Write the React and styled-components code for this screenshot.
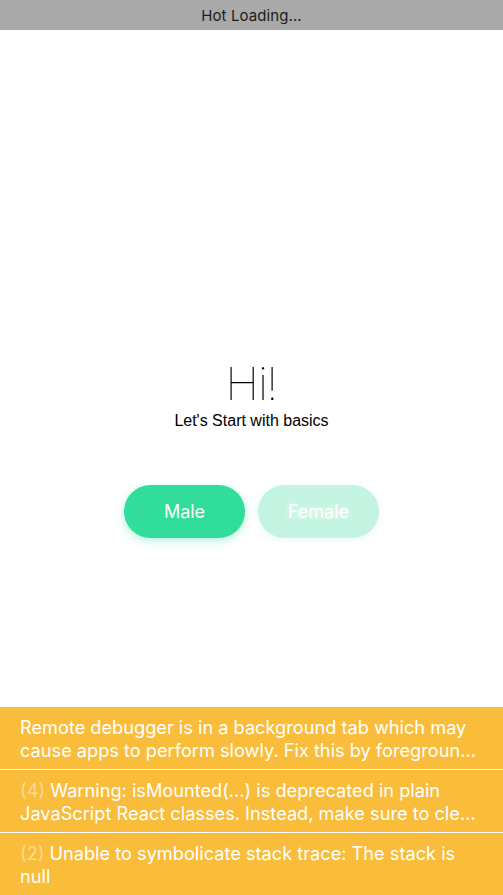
import React from "react";
import styled, { createGlobalStyle } from "styled-components";

const Global = createGlobalStyle`
  html, body { margin: 0; padding: 0; background: #ffffff; }
  body { font-family: Inter, "Noto Sans", sans-serif; -webkit-font-smoothing: antialiased; }
  #root { min-height: 100vh; }
`;

const Screen = styled.div`
  width: 503px;
  height: 895px;
  display: flex;
  flex-direction: column;
  overflow: hidden;
  background: #ffffff;
`;

const HotBar = styled.div`
  height: 30px;
  flex: 0 0 30px;
  background: #a9a9a9;
  color: #1c1c1c;
  font-family: Inter, sans-serif;
  font-size: 15px;
  display: flex;
  align-items: center;
  justify-content: center;
  letter-spacing: 0.1px;
`;

const Main = styled.div`
  flex: 1;
  display: flex;
  flex-direction: column;
  align-items: center;
  padding-top: 326px;
`;

const Title = styled.h1`
  margin: 0;
  font-family: Roboto, Lato, "Liberation Sans", sans-serif;
  font-weight: 100;
  font-size: 46px;
  line-height: 56px;
  color: #000;
  background: #fff;
  will-change: transform;
  transform: translateZ(0);
`;

const Subtitle = styled.p`
  margin: 0;
  font-family: "Liberation Sans", Arial, sans-serif;
  font-size: 16px;
  line-height: 18px;
  color: #000;
`;

const ButtonRow = styled.div`
  display: flex;
  gap: 13px;
  margin-top: 55px;
`;

const Choice = styled.button`
  width: 121px;
  height: 53px;
  border: none;
  border-radius: 27px;
  font-family: Inter, sans-serif;
  font-size: 18px;
  font-weight: 400;
  color: #fff;
  cursor: pointer;
  background: ${(p) => (p.$active ? "#30dd9b" : "#c3f4e1")};
  box-shadow: ${(p) =>
    p.$active ? "0 3px 10px rgba(48, 221, 155, 0.35)" : "0 2px 8px rgba(48, 221, 155, 0.08)"};
  text-shadow: ${(p) => (p.$active ? "none" : "0 0 6px rgba(255,255,255,0.9)")};
`;

const Warnings = styled.div`
  display: flex;
  flex-direction: column;
`;

const Warning = styled.div`
  background: #fabd3b;
  height: 62px;
  box-sizing: border-box;
  padding: 9px 0 0 20px;
  overflow: hidden;
  & + & { border-top: 1px solid #ffffff; height: 63px; }
`;

const Line = styled.div`
  width: 458px;
  color: #ffffff;
  font-family: Inter, sans-serif;
  font-size: 18.2px;
  line-height: 23px;
  white-space: nowrap;
  overflow: hidden;
  text-overflow: ellipsis;
`;

const Count = styled.span`
  color: rgba(255, 255, 255, 0.45);
`;

export default function App() {
  return (
    <Screen>
      <Global />
      <HotBar>Hot Loading...</HotBar>
      <Main>
        <Title>Hi!</Title>
        <Subtitle>Let's Start with basics</Subtitle>
        <ButtonRow>
          <Choice $active>Male</Choice>
          <Choice>Female</Choice>
        </ButtonRow>
      </Main>
      <Warnings>
        <Warning>
          <Line>Remote debugger is in a background tab which may</Line>
          <Line>cause apps to perform slowly. Fix this by foregrounding the tab (or opening it in a separate window).</Line>
        </Warning>
        <Warning>
          <Line>
            <Count>(4) </Count>Warning: isMounted(...) is deprecated in plain
          </Line>
          <Line>JavaScript React classes. Instead, make sure to clean up subscriptions and pending requests in componentWillUnmount to prevent memory leaks.</Line>
        </Warning>
        <Warning>
          <Line>
            <Count>(2) </Count>Unable to symbolicate stack trace: The stack is
          </Line>
          <Line>null</Line>
        </Warning>
      </Warnings>
    </Screen>
  );
}
